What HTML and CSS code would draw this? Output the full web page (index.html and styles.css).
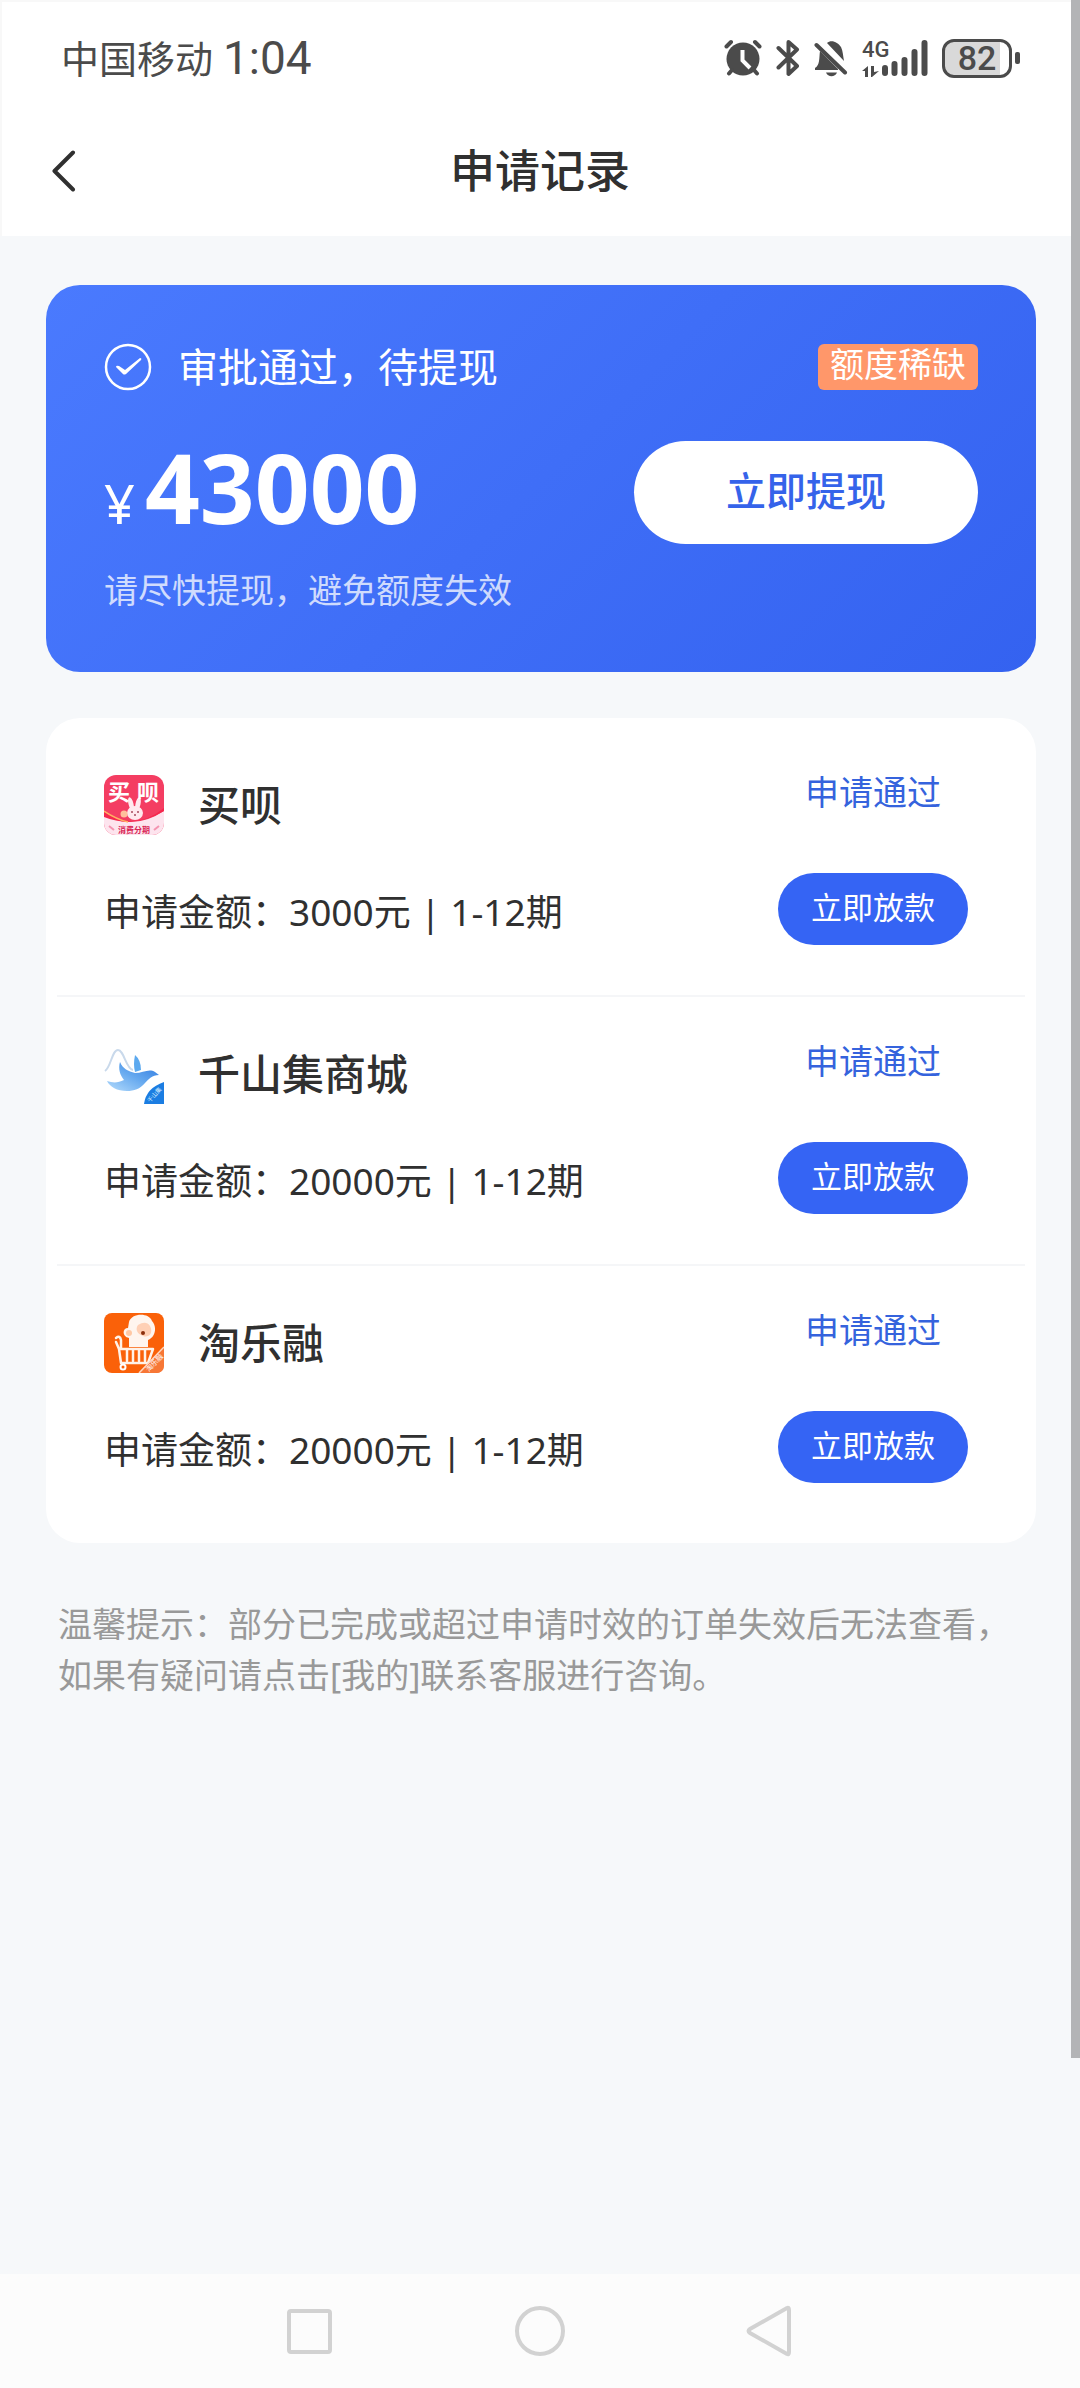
FILE: index.html
```html
<!DOCTYPE html>
<html lang="zh-CN">
<head>
<meta charset="utf-8">
<meta name="viewport" content="width=device-width, initial-scale=1">
<title>申请记录</title>
<link rel="stylesheet" href="styles.css">
</head>
<body>
<header class="header">
  <div class="status-bar">
    <div class="status-left"><span class="carrier">中国移动</span><span class="clock">1:04</span></div>
    <div class="status-right">
      <svg class="alarm" width="38" height="38" viewBox="0 0 38 38" aria-label="闹钟">
        <circle cx="19" cy="20" r="16.500" fill="#4b4b4b"/>
        <path d="M2.500 7.500L7 3M35.500 7.500L31 3M8 31L5 34.500M30 31L33 34.500" stroke="#4b4b4b" stroke-width="4" stroke-linecap="round"/>
        <path d="M18.500 11v10.500l7.500 7.500" fill="none" stroke="#fff" stroke-width="4"/>
      </svg>
      <svg class="bluetooth" width="24" height="38" viewBox="0 0 24 38" aria-label="蓝牙">
        <path d="M2.500 9L21 27l-8.500 8V3L21 10.500 2.500 28.500" fill="none" stroke="#4b4b4b" stroke-width="4" stroke-linecap="round" stroke-linejoin="round"/>
      </svg>
      <svg class="bell" width="34" height="38" viewBox="0 0 34 38" aria-label="静音">
        <path d="M13 4C17 0 24 3 27 8c2 4 2 9 3 14zM6 12L24 30v1H1v-2c5-3 4-10 5-17zM12 33.500h11c-2 5-9 5-11 0z" fill="#4b4b4b"/>
        <path d="M2.500 6L31 33.500" stroke="#4b4b4b" stroke-width="4" stroke-linecap="round"/>
      </svg>
      <div class="signal">
        <div class="network">
          <span>4G</span>
          <svg width="18" height="11" viewBox="0 0 18 11" aria-hidden="true"><path d="M0 5L6 0v11H3V5zM9 0h3v6l5-1-7 6H9z" fill="#4b4b4b"/></svg>
        </div>
        <svg width="46" height="38" viewBox="0 0 46 38" aria-label="信号"><path d="M3 29v5M12.500 25v9M22.500 21v13M32.500 13v21M42.500 4v30" stroke="#4b4b4b" stroke-width="6" stroke-linecap="round"/></svg>
      </div>
      <div class="battery"><span class="battery-body">82</span><span class="battery-tip"></span></div>
    </div>
  </div>
  <div class="title-bar">
    <button class="back" type="button" aria-label="返回">
      <svg width="24" height="42" viewBox="0 0 24 42"><path d="M21 2.500L2.500 21 21 39.500" fill="none" stroke="#303030" stroke-width="4" stroke-linecap="round" stroke-linejoin="round"/></svg>
    </button>
    <h1>申请记录</h1>
  </div>
</header>

<main class="content">
  <section class="credit-card">
    <div class="credit-head">
      <svg width="48" height="48" viewBox="0 0 48 48" aria-hidden="true">
        <circle cx="24" cy="24" r="22" fill="none" stroke="#fff" stroke-width="2.500"/>
        <path d="M12 24q0-2 3-1l6 4 15-12q2 0 1 2L22 31q-2 1-3 0z" fill="#fff"/>
      </svg>
      <h2>审批通过，待提现</h2>
      <span class="badge">额度稀缺</span>
    </div>
    <div class="credit-main">
      <p class="amount"><span class="currency">¥</span><strong>43000</strong></p>
      <button class="withdraw" type="button">立即提现</button>
    </div>
    <p class="credit-note">请尽快提现，避免额度失效</p>
  </section>

  <ul class="records">
    <li class="record">
      <div class="record-info">
        <div class="merchant">
          <svg width="60" height="60" viewBox="0 0 60 60" aria-hidden="true">
            <defs><clipPath id="logo-round"><rect width="60" height="60" rx="12"/></clipPath></defs>
            <g clip-path="url(#logo-round)">
              <rect width="60" height="60" fill="#f43d62"/>
              <path d="M0 40q30 16 60-4v24H0z" fill="#fde4ee"/>
              <path d="M0 37q31 20 60-4v3Q30 54 0 42z" fill="#f5274d"/>
              <path d="M0 36q12 8 24 11" fill="none" stroke="#ffb163" stroke-width="1.500"/>
              <g fill="#ffe9ee"><ellipse cx="27" cy="29" rx="2.500" ry="7" transform="rotate(-14 27 29)"/><ellipse cx="34" cy="29" rx="2.500" ry="7" transform="rotate(12 34 29)"/><ellipse cx="31" cy="38" rx="8" ry="7"/></g>
              <circle cx="20" cy="39" r="3.500" fill="#ffc09b"/>
              <path d="M28 36v2M34 36v2M30 40h2" stroke="#a74a5c" stroke-width="1.500"/>
              <path d="M5 51l5 4M55 51l-5 4" stroke="#f494b1" stroke-width="2"/>
              <text class="logo-name" x="4" y="25">买</text><text class="logo-name" x="33" y="25">呗</text>
              <text class="logo-tag" x="14" y="58">消费分期</text>
            </g>
          </svg>
          <h3>买呗</h3>
        </div>
        <p>申请金额：3000元 | 1-12期</p>
      </div>
      <div class="record-action">
        <span class="state">申请通过</span>
        <button class="loan" type="button">立即放款</button>
      </div>
    </li>
    <li class="record">
      <div class="record-info">
        <div class="merchant">
          <svg width="60" height="60" viewBox="0 0 60 60" aria-hidden="true">
            <defs><linearGradient id="bird" x1="0" y1="1" x2="1" y2="0"><stop offset="0" stop-color="#b5dcfc"/><stop offset=".5" stop-color="#66a9ef"/><stop offset="1" stop-color="#2c77df"/></linearGradient></defs>
            <path d="M1 27C7 23 8 6 14 6s8 19 15 20" fill="none" stroke="#c9d9eb" stroke-width="2"/>
            <path d="M31 11q6 5 6 15l-6 2q-2-7 0-17z" fill="#5ca9ef"/>
            <path d="M16 18c3 7 8 9 15 11 8 0 14-5 20-1l4 3c-7 0-10 4-14 8-5 6-11 8-18 8C13 47 6 43 3 37c6 2 11 2 17-1-4-5-6-11-4-18z" fill="url(#bird)"/>
            <path d="M60 38v22H40q2-16 20-22z" fill="#1b7de2"/>
            <text class="logo-corner" x="46" y="59" transform="rotate(-48 46 59)">千山集</text>
          </svg>
          <h3>千山集商城</h3>
        </div>
        <p>申请金额：20000元 | 1-12期</p>
      </div>
      <div class="record-action">
        <span class="state">申请通过</span>
        <button class="loan" type="button">立即放款</button>
      </div>
    </li>
    <li class="record">
      <div class="record-info">
        <div class="merchant">
          <svg width="60" height="60" viewBox="0 0 60 60" aria-hidden="true">
            <rect width="60" height="60" rx="8" fill="#fa6109"/>
            <path d="M25 9C27 0 45-1 48 8c5 5 4 16-4 19v7H25v-9c-7-1-7-10-1-10z" fill="#fff5ee"/>
            <circle cx="25" cy="20" r="3" fill="#ffc8a4"/>
            <path d="M34 12q8-5 12 1c4 8-2 12-7 10-6-2-8-7-5-11z" fill="#ffd0b5"/>
            <circle cx="39" cy="20" r="2" fill="#8b2f0c"/>
            <path d="M12 25q4-3 5 2v9M12 29l3 7h34l-5 14H17l-2-14M23 36v12M29 36v12M35 36v12M41 36v12" fill="none" stroke="#fff2e8" stroke-width="2.500" stroke-linecap="round" stroke-linejoin="round"/>
            <circle cx="19" cy="54" r="2.500" fill="none" stroke="#fff" stroke-width="2"/>
            <path d="M60 34L35 60h17q8 0 8-8z" fill="#f77736"/>
            <path d="M60 34L35 60" stroke="#ffd9c2" stroke-width="1.500"/>
            <text class="logo-ribbon" x="45" y="59" transform="rotate(-46 45 59)">淘乐融</text>
          </svg>
          <h3>淘乐融</h3>
        </div>
        <p>申请金额：20000元 | 1-12期</p>
      </div>
      <div class="record-action">
        <span class="state">申请通过</span>
        <button class="loan" type="button">立即放款</button>
      </div>
    </li>
  </ul>

  <p class="tips">温馨提示：部分已完成或超过申请时效的订单失效后无法查看，如果有疑问请点击[我的]联系客服进行咨询。</p>
</main>

<nav class="system-nav" aria-label="系统导航">
  <button type="button" aria-label="最近任务"><svg width="52" height="52" viewBox="0 0 52 52"><rect x="5" y="6" width="41" height="41" rx="2"/></svg></button>
  <button type="button" aria-label="主屏幕"><svg width="52" height="52" viewBox="0 0 52 52"><circle cx="26" cy="26" r="23"/></svg></button>
  <button type="button" aria-label="返回"><svg width="52" height="52" viewBox="0 0 52 52"><path d="M43 3q2-1 2 2v42q0 3-2 2L6 28q-3-2 0-4z"/></svg></button>
</nav>
<div class="scroll-thumb"></div>
</body>
</html>
```
FILE: styles.css
```css
* {
  box-sizing: border-box;
  margin: 0;
  padding: 0;
}

body {
  position: relative;
  display: flex;
  flex-direction: column;
  min-height: 100vh;
  background: #f6f8fa;
  color: #303030;
  font-family: "Noto Sans", "Noto Sans CJK SC", sans-serif;
}

button {
  border: 0;
  background: none;
  font-family: inherit;
  cursor: pointer;
}

h1,
h2,
h3 {
  font-weight: 400;
}

svg {
  display: block;
  flex: none;
}

/* Header */
.header {
  padding-bottom: 10px;
  background: #fff;
  box-shadow: inset 2px 2px #f8f8f8;
}

.status-bar {
  display: flex;
  justify-content: space-between;
  align-items: center;
  height: 116px;
  padding: 0 60px 0 61px;
  color: #4b4b4b;
}

.status-left,
.status-right,
.signal,
.battery {
  display: flex;
  align-items: center;
}

.status-left {
  gap: 10px;
}

.carrier {
  font-size: 38px;
  line-height: 40px;
}

.clock {
  font-family: Roboto, sans-serif;
  font-size: 46px;
  line-height: 48px;
}

.bluetooth,
.bell,
.signal,
.battery {
  margin-left: 14px;
}

.network {
  display: flex;
  flex-direction: column;
  gap: 6px;
  width: 20px;
  font-family: Roboto, sans-serif;
  font-size: 22px;
  font-weight: 500;
  line-height: 20px;
}

.battery {
  gap: 3px;
}

.battery-body {
  width: 70px;
  border: 3px solid #4b4b4b;
  border-radius: 12px;
  background: linear-gradient(90deg, #d9d9d9 86%, #fff 86%);
  font-family: Roboto, sans-serif;
  font-size: 34px;
  font-weight: 500;
  line-height: 33px;
  text-align: center;
}

.battery-tip {
  width: 5px;
  height: 12px;
  border-radius: 2px;
  background: #4b4b4b;
}

.title-bar {
  display: grid;
  grid-template-columns: 1fr auto 1fr;
  align-items: center;
  height: 110px;
  padding: 0 52px;
}

.back {
  justify-self: start;
}

.title-bar h1 {
  font-size: 45px;
  font-weight: 500;
  line-height: 48px;
}

/* Content */
.content {
  flex: 1;
  padding: 49px 44px 49px 46px;
}

.credit-card {
  padding: 58px;
  border-radius: 34px;
  background: linear-gradient(135deg, #4a7afe, #3462f0);
  color: #fff;
}

.credit-head {
  display: flex;
  align-items: center;
  height: 48px;
  gap: 26px;
}

.credit-head h2 {
  font-size: 40px;
  line-height: 48px;
}

.badge {
  margin-left: auto;
  padding: 0 12px 6px;
  border-radius: 6px;
  background: #ff976a;
  font-size: 34px;
  line-height: 40px;
}

.credit-main {
  display: flex;
  justify-content: space-between;
  align-items: flex-start;
  margin-top: 50px;
}

.amount {
  display: flex;
  align-items: baseline;
  gap: 10px;
}

.currency {
  font-size: 54px;
  line-height: 54px;
}

.amount strong {
  font-size: 96px;
  line-height: 92px;
}

.withdraw {
  width: 344px;
  height: 103px;
  padding-bottom: 4px;
  border-radius: 52px;
  background: #fff;
  color: #3563ea;
  font-size: 40px;
  font-weight: 500;
  line-height: 48px;
}

.credit-note {
  margin-top: 22px;
  color: rgba(255, 255, 255, .75);
  font-size: 34px;
  line-height: 48px;
}

/* Application records */
.records {
  margin-top: 46px;
  padding: 10px 11px;
  border-radius: 34px;
  background: #fff;
  list-style: none;
}

.record {
  display: flex;
  justify-content: space-between;
  padding: 47px 57px 50px 47px;
  border-bottom: 2px solid #f5f6f8;
}

.record:last-child {
  border-bottom: 0;
}

.record-info {
  display: flex;
  flex-direction: column;
  gap: 52px;
}

.merchant {
  display: flex;
  align-items: center;
  height: 60px;
  gap: 34px;
}

.merchant h3 {
  font-size: 42px;
  font-weight: 500;
  line-height: 48px;
}

.record-info p {
  font-size: 37px;
  line-height: 50px;
}

.record-action {
  display: flex;
  flex-direction: column;
  align-items: center;
  gap: 64px;
}

.state {
  color: #3563dd;
  font-size: 34px;
  line-height: 34px;
}

.loan {
  width: 190px;
  height: 72px;
  padding-bottom: 4px;
  border-radius: 36px;
  background: #3564f4;
  color: #fff;
  font-size: 31px;
  line-height: 40px;
}

.logo-name {
  fill: #fff;
  font-size: 22px;
  font-weight: 700;
}

.logo-tag {
  fill: #d92555;
  font-size: 8px;
  font-weight: 700;
}

.logo-corner {
  fill: #d8efff;
  font-size: 6px;
}

.logo-ribbon {
  fill: #fff;
  font-size: 7px;
}

.tips {
  margin-top: 56px;
  padding: 0 12px;
  color: #999;
  font-size: 34px;
  line-height: 51px;
}

/* System navigation */
.system-nav {
  display: flex;
  justify-content: center;
  gap: 178px;
  padding: 31px 0;
  background: #fcfcfc;
}

.system-nav svg {
  fill: none;
  stroke: #d2d2d2;
  stroke-width: 4;
}

.scroll-thumb {
  position: absolute;
  top: 0;
  right: 0;
  width: 9px;
  height: 86.2%;
  background: #b3b4b6;
}
```
